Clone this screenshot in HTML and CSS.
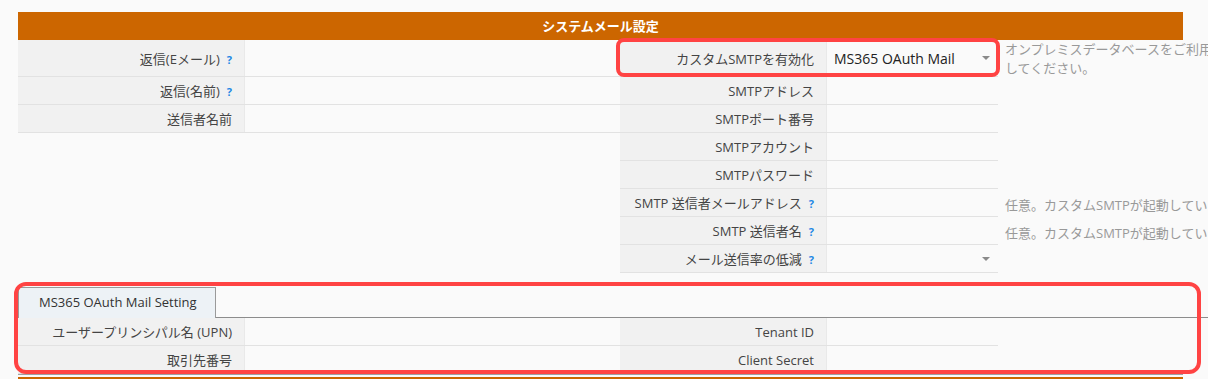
FILE: index.html
```html
<!DOCTYPE html>
<html lang="ja">

<head>
    <meta charset="UTF-8">
    <meta name="viewport" content="width=device-width, initial-scale=1.0">
    <title>システムメール設定</title>
    <link rel="stylesheet" href="styles.css">
</head>

<body>
    <div class="page">
        <section class="panel">
            <div class="panel-head">システムメール設定</div>

            <div class="form">
                <div class="col col-left">
                    <div class="row tall">
                        <div class="pair">
                            <div class="label">返信(Eメール)<span class="hint">?</span></div>
                            <div class="value"></div>
                        </div>
                    </div>
                    <div class="row">
                        <div class="pair">
                            <div class="label">返信(名前)<span class="hint">?</span></div>
                            <div class="value"></div>
                        </div>
                    </div>
                    <div class="row">
                        <div class="pair">
                            <div class="label">送信者名前</div>
                            <div class="value"></div>
                        </div>
                    </div>
                </div>

                <div class="col col-right">
                    <div class="row tall">
                        <div class="pair marked">
                            <div class="label">カスタムSMTPを有効化</div>
                            <div class="value select">MS365 OAuth Mail<span class="caret"></span></div>
                        </div>
                        <div class="help top">オンプレミスデータベースをご利用してください。</div>
                    </div>
                    <div class="row">
                        <div class="pair">
                            <div class="label">SMTPアドレス</div>
                            <div class="value"></div>
                        </div>
                    </div>
                    <div class="row">
                        <div class="pair">
                            <div class="label">SMTPポート番号</div>
                            <div class="value"></div>
                        </div>
                    </div>
                    <div class="row">
                        <div class="pair">
                            <div class="label">SMTPアカウント</div>
                            <div class="value"></div>
                        </div>
                    </div>
                    <div class="row">
                        <div class="pair">
                            <div class="label">SMTPパスワード</div>
                            <div class="value"></div>
                        </div>
                    </div>
                    <div class="row">
                        <div class="pair">
                            <div class="label">SMTP 送信者メールアドレス<span class="hint">?</span></div>
                            <div class="value"></div>
                        </div>
                        <div class="help">任意。カスタムSMTPが起動している場合</div>
                    </div>
                    <div class="row">
                        <div class="pair">
                            <div class="label">SMTP 送信者名<span class="hint">?</span></div>
                            <div class="value"></div>
                        </div>
                        <div class="help">任意。カスタムSMTPが起動している場合</div>
                    </div>
                    <div class="row">
                        <div class="pair">
                            <div class="label">メール送信率の低減<span class="hint">?</span></div>
                            <div class="value select"><span class="caret"></span></div>
                        </div>
                    </div>
                </div>
            </div>

            <div class="tab-block marked">
                <div class="tabs">
                    <div class="tab">MS365 OAuth Mail Setting</div>
                </div>
                <div class="form">
                    <div class="col col-left">
                        <div class="row">
                            <div class="pair">
                                <div class="label">ユーザープリンシパル名 (UPN)</div>
                                <div class="value"></div>
                            </div>
                        </div>
                        <div class="row">
                            <div class="pair">
                                <div class="label">取引先番号</div>
                                <div class="value"></div>
                            </div>
                        </div>
                    </div>
                    <div class="col col-right">
                        <div class="row">
                            <div class="pair">
                                <div class="label">Tenant ID</div>
                                <div class="value"></div>
                            </div>
                        </div>
                        <div class="row">
                            <div class="pair">
                                <div class="label">Client Secret</div>
                                <div class="value"></div>
                            </div>
                        </div>
                    </div>
                </div>
            </div>
        </section>

        <div class="panel-next"></div>
    </div>
</body>

</html>
```

FILE: styles.css
```css
html,
body {
    margin: 0;
    background-color: #fafafa;
    overflow: hidden;
}

body {
    font-family: "Open Sans", "Noto Sans CJK JP", sans-serif;
    font-size: 13px;
    color: #444;
}

.page {
    width: 1208px;
    padding-top: 12px;
}

.panel {
    width: 1165px;
    margin-left: 18px;
}

.panel-head {
    height: 28px;
    line-height: 28px;
    background-color: #cc6600;
    color: #fff;
    font-weight: bold;
    text-align: center;
}

.form {
    display: flex;
}

.col-left {
    width: 602px;
}

.col-right {
    flex: 1;
}

.row {
    display: flex;
    height: 28px;
}

.row.tall {
    height: 37px;
}

.pair {
    display: flex;
    box-sizing: border-box;
    height: 100%;
    border-bottom: 1px solid #e2e2e2;
    position: relative;
}

.col-left .pair {
    width: 602px;
}

.col-right .pair {
    width: 378px;
    flex-shrink: 0;
}

.label {
    box-sizing: border-box;
    background-color: #f1f1f1;
    text-align: right;
    padding-right: 12px;
    display: flex;
    align-items: center;
    justify-content: flex-end;
    white-space: nowrap;
}

.col-left .label {
    width: 227px;
    border-right: 1px solid #e9e9e9;
}

.col-right .label {
    width: 207px;
    border-right: 1px solid #e9e9e9;
}

.value {
    flex: 1;
    display: flex;
    align-items: center;
}

.hint {
    color: #1e88e5;
    font-size: 11px;
    font-weight: bold;
    margin-left: 7px;
    margin-top: 2px;
}

.select {
    padding: 0 8px 0 7px;
    color: #222;
    font-size: 14px;
    justify-content: space-between;
}

.caret {
    margin-left: auto;
    width: 0;
    height: 0;
    border-left: 4px solid transparent;
    border-right: 4px solid transparent;
    border-top: 4px solid #8a8a8a;
}

.help {
    width: 206px;
    padding-left: 7px;
    color: #999;
    white-space: nowrap;
    display: flex;
    align-items: center;
    margin-top: 2px;
}

.help.top {
    white-space: normal;
    align-items: flex-start;
    line-height: 19px;
    margin-top: 0;
    width: 213px;
}

.marked {
    position: relative;
}

.pair.marked::after {
    content: "";
    position: absolute;
    top: -2px;
    left: -4px;
    right: -2px;
    bottom: -1px;
    border: 4px solid #ff4343;
    border-radius: 8px;
    pointer-events: none;
}

.tab-block {
    margin-top: 14px;
    border-bottom: 1px solid #a0a0a0;
}

.tab-block.marked::after {
    content: "";
    position: absolute;
    top: -5px;
    left: -4px;
    right: -18px;
    bottom: 0;
    border: 4px solid #ff4343;
    border-radius: 12px;
    pointer-events: none;
}

.tabs {
    display: flex;
    height: 31px;
    box-sizing: border-box;
    border-bottom: 1px solid #8c8c8c;
    margin-right: -40px;
}

.tab {
    width: 198px;
    box-sizing: border-box;
    height: 31px;
    background-color: #edf2f6;
    border: 1px solid #9a9a9a;
    border-bottom: none;
    padding-left: 20px;
    line-height: 29px;
    color: #333;
}

.panel-next {
    width: 1165px;
    height: 12px;
    margin: 2px 0 0 18px;
    background-color: #cc6600;
}
```
